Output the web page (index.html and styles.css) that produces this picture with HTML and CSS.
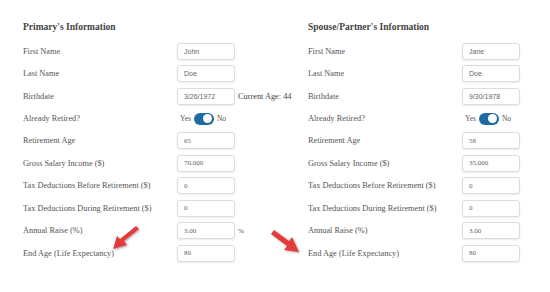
FILE: index.html
```html
<!DOCTYPE html>
<html lang="en">
<head>
  <meta charset="UTF-8" />
  <title>Retirement Information</title>
  <link rel="stylesheet" href="styles.css">
</head>
<body>
  <div class="page">
    <div class="col">
      <h2>Primary's Information</h2>
      <div class="row"><label>First Name</label><input class="txt" value="John"></div>
      <div class="row"><label>Last Name</label><input class="txt" value="Doe"></div>
      <div class="row"><label>Birthdate</label><input class="txt" value="3/26/1972"><span class="after">Current Age: 44</span></div>
      <div class="row"><label>Already Retired?</label>
        <div class="toggle-wrap">Yes <span class="toggle"><span class="knob"></span></span> No</div>
      </div>
      <div class="row"><label>Retirement Age</label><input class="num" value="65"></div>
      <div class="row"><label>Gross Salary Income ($)</label><input class="num" value="70,000"></div>
      <div class="row"><label>Tax Deductions Before Retirement ($)</label><input class="num" value="0"></div>
      <div class="row"><label>Tax Deductions During Retirement ($)</label><input class="num" value="0"></div>
      <div class="row"><label>Annual Raise (%)</label><input class="num" value="3.00"><span class="after small">%</span></div>
      <div class="row"><label>End Age (Life Expectancy)</label><input class="num" value="80"></div>
    </div>

    <div class="col col-spouse">
      <h2>Spouse/Partner's Information</h2>
      <div class="row"><label>First Name</label><input class="txt" value="Jane"></div>
      <div class="row"><label>Last Name</label><input class="txt" value="Doe"></div>
      <div class="row"><label>Birthdate</label><input class="txt" value="9/30/1978"></div>
      <div class="row"><label>Already Retired?</label>
        <div class="toggle-wrap">Yes <span class="toggle"><span class="knob"></span></span> No</div>
      </div>
      <div class="row"><label>Retirement Age</label><input class="num" value="58"></div>
      <div class="row"><label>Gross Salary Income ($)</label><input class="num" value="35,000"></div>
      <div class="row"><label>Tax Deductions Before Retirement ($)</label><input class="num" value="0"></div>
      <div class="row"><label>Tax Deductions During Retirement ($)</label><input class="num" value="0"></div>
      <div class="row"><label>Annual Raise (%)</label><input class="num" value="3.00"></div>
      <div class="row"><label>End Age (Life Expectancy)</label><input class="num" value="80"></div>
    </div>

    <!-- pointer arrows drawn over the form -->
    <svg class="arrow arrow-left" width="30" height="28" viewBox="0 0 30 28">
      <defs><filter id="sh1"><feDropShadow dx="1" dy="1" stdDeviation="1" flood-opacity="0.35"/></filter></defs>
      <path d="M26 2 L29 5 L14 17 L17 21 L3 25 L7 12 L10 15 Z" fill="#e33b3b" filter="url(#sh1)"/>
    </svg>
    <svg class="arrow arrow-right" width="34" height="28" viewBox="0 0 34 28">
      <defs><filter id="sh2"><feDropShadow dx="1" dy="1" stdDeviation="1" flood-opacity="0.35"/></filter></defs>
      <path d="M2 6 L5 2 L20 13 L23 9 L30 24 L15 22 L18 18 Z" fill="#e33b3b" filter="url(#sh2)"/>
    </svg>
  </div>
</body>
</html>
```

FILE: styles.css
```css
body {
  margin: 0;
  background: #fff;
  font-family: 'Liberation Serif', 'Times New Roman', 'DejaVu Serif', serif;
  color: #555;
}
.page {
  position: relative;
  display: flex;
  padding: 21px 0 0 23px;
}
.col {
  flex: none;
  width: 285px;
}
.col-spouse {
  width: 220px;
}
h2 {
  margin: 0 0 7px;
  font-size: 9.5px;
  line-height: 12px;
  font-weight: bold;
  color: #444;
}
.row {
  display: flex;
  align-items: center;
  height: 22.45px;
  font-size: 8.3px;
  white-space: nowrap;
}
.row label {
  width: 154px;
  flex: none;
}
input {
  flex: none;
  box-sizing: border-box;
  width: 58px;
  height: 17px;
  padding: 0 6px;
  border: 1px solid #dcdcdc;
  border-radius: 3px;
  box-shadow: 0 1px 2px rgba(0,0,0,0.08);
  color: #666;
  background: #fff;
}
.txt {
  font-family: 'Liberation Sans', Arial, sans-serif;
  font-size: 7px;
}
.num {
  font-family: 'Liberation Serif', serif;
  font-size: 7px;
}
.after {
  margin-left: 3px;
  font-size: 8.3px;
  color: #444;
}
.after.small {
  font-size: 7px;
}
.toggle-wrap {
  display: flex;
  align-items: center;
  gap: 3px;
  padding-left: 3px;
  font-size: 7.5px;
}
.toggle {
  position: relative;
  width: 20px;
  height: 12px;
  border-radius: 6px;
  background: #1d6aa5;
}
.knob {
  position: absolute;
  right: 1.5px;
  top: 1.5px;
  width: 9px;
  height: 9px;
  border-radius: 50%;
  background: #fff;
}
.arrow {
  position: absolute;
}
.arrow-left {
  left: 110px;
  top: 224px;
}
.arrow-right {
  left: 269px;
  top: 228px;
}
```
